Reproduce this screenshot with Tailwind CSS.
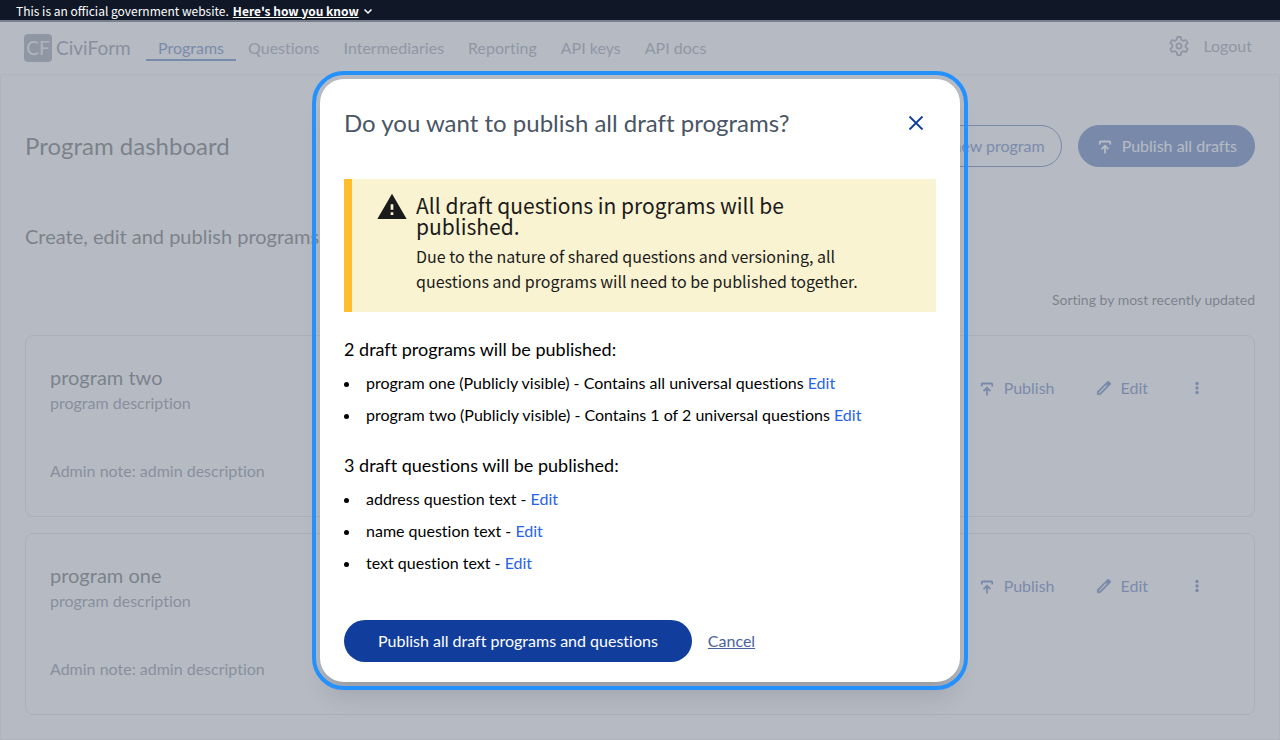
<!DOCTYPE html>
<html lang="en">
<head>
<meta charset="utf-8">
<meta name="viewport" content="width=device-width, initial-scale=1">
<title>Program dashboard</title>
<script src="https://cdn.jsdelivr.net/npm/@tailwindcss/browser@4"></script>
</head>
<body class="relative min-h-screen bg-white font-['Lato','Liberation_Sans',sans-serif] text-base text-[#1b1b1b] [font-variant-ligatures:none]">

<svg class="hidden" aria-hidden="true">
  <symbol id="publish" viewBox="0 0 24 24" fill="none" stroke="currentColor" stroke-width="2.4">
    <path d="M5 10V7q0-1 1-1h12q1 0 1 1v3M12 22V12M7.400 16.300 12 11.700l4.600 4.600"/>
  </symbol>
  <symbol id="edit" viewBox="0 0 24 24" fill="currentColor">
    <path stroke="currentColor" stroke-width=".6" fill-rule="evenodd" d="M3 21v-4.250L16.200 3.575q.3-.275.663-.425.362-.15.762-.15.400 0 .775.150.375.150.650.450L20.425 5q.3.275.438.650.137.375.137.750 0 .400-.137.763-.138.362-.438.637L7.250 21ZM5 19h1.400l9.800-9.775L14.775 7.800 5 17.600Z"/>
  </symbol>
  <symbol id="more" viewBox="0 0 24 24" fill="currentColor">
    <circle cx="12" cy="6" r="2.200"/><circle cx="12" cy="12" r="2.200"/><circle cx="12" cy="18" r="2.200"/>
  </symbol>
</svg>

<div class="flex h-[22px] items-center gap-1 bg-gray-900 px-4 pb-px font-['Noto_Sans_CJK_SC',sans-serif] text-xs leading-5 text-white [font-variant-ligatures:normal]">
  <p>This is an official government website.</p>
  <button type="button" class="flex items-center gap-1 font-bold leading-5">
    <span class="underline">Here's how you know</span>
    <svg class="size-2.5" viewBox="0 0 10 10" fill="none" stroke="currentColor" stroke-width="1.500" aria-hidden="true"><path d="m1.500 3.500 3.500 3.500 3.500-3.500"/></svg>
  </button>
</div>

<header class="flex h-[52px] items-start justify-between px-6 pt-3 text-gray-500">
  <div class="flex items-start">
    <a href="#" class="flex items-center gap-1 text-[19px] leading-7 text-gray-600">
      <span class="flex size-7 items-center justify-center rounded bg-gray-500 text-gray-200">CF</span>
      <span class="w-[90px]">CiviForm</span>
    </a>
    <nav class="flex">
      <a href="#" class="border-b-2 border-[#113e9c] px-3 pt-[3px] leading-[22px] text-[#113e9c]">Programs</a>
      <a href="#" class="px-3 pt-[3px] leading-[22px]">Questions</a>
      <a href="#" class="px-3 pt-[3px] leading-[22px]">Intermediaries</a>
      <a href="#" class="px-3 pt-[3px] leading-[22px]">Reporting</a>
      <a href="#" class="px-3 pt-[3px] leading-[22px]">API keys</a>
      <a href="#" class="px-3 pt-[3px] leading-[22px]">API docs</a>
    </nav>
  </div>
  <div class="flex items-center gap-3 pr-1">
    <button type="button" aria-label="Settings">
      <svg class="size-6" viewBox="0 0 24 24" fill="none" stroke="currentColor" stroke-width="1.800" stroke-linejoin="round" aria-hidden="true">
        <path d="M10.300 3h3.400l.6 2.700 2 1.150 2.650-.8 1.700 2.950-2.050 1.900v2.200l2.050 1.900-1.700 2.950-2.650-.8-2 1.150-.6 2.700h-3.400l-.6-2.700-2-1.150-2.650.8L3.350 15l2.050-1.900v-2.200L3.350 9l1.700-2.950 2.650.8 2-1.150Z"/>
        <circle cx="12" cy="12" r="2.600"/>
      </svg>
    </button>
    <a href="#" class="leading-6">Logout</a>
  </div>
</header>

<main class="border border-gray-200 p-6">
  <div class="mt-[26px] flex items-center justify-between">
    <h1 class="text-2xl leading-8">Program dashboard</h1>
    <div class="flex gap-4 text-base leading-6">
      <button type="button" class="flex h-[42px] items-center gap-2 rounded-full border border-[#113e9c] px-4 text-[#113e9c]">
        <svg class="size-[18px]" viewBox="0 0 24 24" fill="none" stroke="currentColor" stroke-width="2" aria-hidden="true"><path d="M12 5v14M5 12h14"/></svg>
        Create new program
      </button>
      <button type="button" class="flex h-[42px] items-center gap-2 rounded-full border border-[#113e9c] bg-[#113e9c] px-[17px] text-white">
        <svg class="size-[18px]" aria-hidden="true"><use href="#publish"/></svg>
        Publish all drafts
      </button>
    </div>
  </div>
  <p class="mt-[55px] text-xl leading-7">Create, edit and publish programs in TestCity</p>
  <p class="mt-10 text-right text-sm leading-5">Sorting by most recently updated</p>

  <div class="mt-[25px] flex flex-col gap-4">
    <article class="flex justify-between rounded-lg border border-gray-300 pt-[27px] pr-8 pb-[33px] pl-6">
      <div>
        <h2 class="text-xl leading-7">program two</h2>
        <p class="leading-6 text-gray-600">program description</p>
        <p class="mt-11 leading-6 text-gray-600">Admin note: admin description</p>
      </div>
      <div class="mt-1 flex items-start gap-2 text-[#113e9c]">
        <button type="button" class="flex h-[42px] items-center gap-2 px-4"><svg class="size-[18px]" aria-hidden="true"><use href="#publish"/></svg>Publish</button>
        <button type="button" class="flex h-[42px] items-center gap-2 px-4"><svg class="size-[18px]" aria-hidden="true"><use href="#edit"/></svg>Edit</button>
        <button type="button" aria-label="More options" class="flex h-[42px] items-center px-4"><svg class="size-[18px]" aria-hidden="true"><use href="#more"/></svg></button>
      </div>
    </article>
    <article class="flex justify-between rounded-lg border border-gray-300 pt-[27px] pr-8 pb-[33px] pl-6">
      <div>
        <h2 class="text-xl leading-7">program one</h2>
        <p class="leading-6 text-gray-600">program description</p>
        <p class="mt-11 leading-6 text-gray-600">Admin note: admin description</p>
      </div>
      <div class="mt-1 flex items-start gap-2 text-[#113e9c]">
        <button type="button" class="flex h-[42px] items-center gap-2 px-4"><svg class="size-[18px]" aria-hidden="true"><use href="#publish"/></svg>Publish</button>
        <button type="button" class="flex h-[42px] items-center gap-2 px-4"><svg class="size-[18px]" aria-hidden="true"><use href="#edit"/></svg>Edit</button>
        <button type="button" aria-label="More options" class="flex h-[42px] items-center px-4"><svg class="size-[18px]" aria-hidden="true"><use href="#more"/></svg></button>
      </div>
    </article>
  </div>
</main>

<!-- Modal layer, below the government banner -->
<div class="absolute inset-x-0 top-5 bottom-0 flex items-center justify-center bg-[#9ca3af]/75">
  <section role="dialog" aria-modal="true" aria-labelledby="modal-title" class="w-1/2 rounded-3xl bg-white px-6 pt-6 pb-5 text-black shadow-xl outline-4 outline-offset-4 outline-[#2491ff]">
    <div class="flex h-10 items-center justify-between">
      <h2 id="modal-title" class="text-2xl leading-8 text-gray-600">Do you want to publish all draft programs?</h2>
      <button type="button" aria-label="Close" class="flex size-10 items-center justify-center text-[#113e9c]">
        <svg class="size-6" viewBox="0 0 24 24" fill="none" stroke="currentColor" stroke-width="1.800" aria-hidden="true"><path d="M5.500 5.500l13 13M18.500 5.500l-13 13"/></svg>
      </button>
    </div>

    <div class="mt-9 flex items-start gap-2 border-l-8 border-[#ffbe2e] bg-[#faf3d1] pt-4 pr-16 pb-[18px] pl-6 font-['Noto_Sans_CJK_SC',sans-serif] text-[#1b1b1b] [font-variant-ligatures:normal]">
      <svg class="-mt-1 size-8 shrink-0" viewBox="0 0 24 24" fill="currentColor" aria-hidden="true"><path fill-rule="evenodd" d="M1 21h22L12 2 1 21zm12-3h-2v-2h2v2zm0-4h-2v-4h2v4z"/></svg>
      <div>
        <h3 class="mb-[7px] text-[21px] leading-[21px]">All draft questions in programs will be published.</h3>
        <p class="text-base leading-[25px]">Due to the nature of shared questions and versioning, all questions and programs will need to be published together.</p>
      </div>
    </div>

    <h3 class="mt-[23px] text-lg leading-7">2 draft programs will be published:</h3>
    <ul class="mt-2 list-inside list-disc space-y-2 leading-6">
      <li>program one (Publicly visible) - Contains all universal questions <a href="#" class="text-[#2563eb]">Edit</a></li>
      <li>program two (Publicly visible) - Contains 1 of 2 universal questions <a href="#" class="text-[#2563eb]">Edit</a></li>
    </ul>
    <h3 class="mt-6 text-lg leading-7">3 draft questions will be published:</h3>
    <ul class="mt-2 list-inside list-disc space-y-2 leading-6">
      <li>address question text - <a href="#" class="text-[#2563eb]">Edit</a></li>
      <li>name question text - <a href="#" class="text-[#2563eb]">Edit</a></li>
      <li>text question text - <a href="#" class="text-[#2563eb]">Edit</a></li>
    </ul>

    <div class="mt-[45px] flex items-center gap-4">
      <button type="button" class="h-[42px] rounded-full bg-[#113e9c] px-[34px] text-white">Publish all draft programs and questions</button>
      <button type="button" class="text-[#4a629e] underline">Cancel</button>
    </div>
  </section>
</div>
</body>
</html>
